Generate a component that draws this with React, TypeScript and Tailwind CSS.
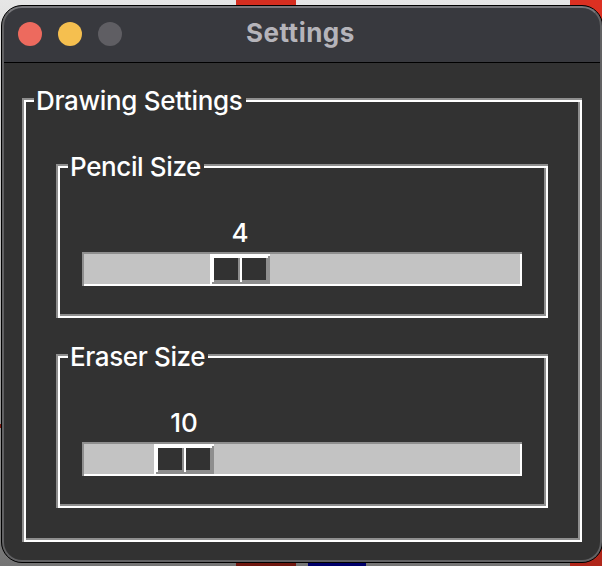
import React from "react";

type GroupProps = {
  title: string;
  className: string;
  labelClass: string;
  textClass: string;
  children: React.ReactNode;
};

function GroupBox({ title, className, labelClass, textClass, children }: GroupProps) {
  return (
    <section
      className={`relative p-0.5 shadow-[inset_2px_2px_0_#8e8e8e,inset_-2px_-2px_0_#fff] ${className}`}
    >
      <div className="h-full shadow-[inset_2px_2px_0_#fff,inset_-2px_-2px_0_#8e8e8e]">{children}</div>
      <div className={`absolute -top-3 left-3 h-[30px] bg-[#323232] pl-0.5 leading-[30px] ${labelClass}`}>
        <span className={`block whitespace-nowrap ${textClass}`}>{title}</span>
      </div>
    </section>
  );
}

function ThumbHalf() {
  return (
    <div className="flex-1 bg-[#323232] shadow-[inset_2px_2px_0_#fff,inset_-2px_-2px_0_#8e8e8e]" />
  );
}

function Scale({ value, offset }: { value: number; offset: string }) {
  return (
    <div className="px-6 pt-[52px]">
      <div className={offset}>
        <div className="h-[34px] w-[60px] text-center leading-[30px]">{value}</div>
      </div>
      <div className="h-[34px] bg-[#c3c3c3] py-0.5 shadow-[inset_2px_2px_0_#8e8e8e,inset_-2px_-2px_0_#fff]">
        <div className={offset}>
          <div className="flex h-[30px] w-[60px] p-0.5 shadow-[inset_2px_2px_0_#fff,inset_-2px_-2px_0_#8e8e8e]">
            <ThumbHalf />
            <ThumbHalf />
          </div>
        </div>
      </div>
    </div>
  );
}

export default function App() {
  return (
    <div className="relative h-[566px] w-[602px] overflow-hidden bg-linear-to-b from-[#e6e6e6] via-[#b4b4b4] to-[#747474] pl-px pt-[5px] font-['Inter','Liberation_Sans',sans-serif] text-[26px] font-medium text-white">
      <div className="absolute left-[236px] top-0 h-10 w-[60px] bg-[#d52e20]" />
      <div className="absolute left-[570px] top-0 h-20 w-8 bg-[#dc3022]" />
      <div className="absolute left-0 top-[424px] h-1 w-1 bg-[#7a1a12]" />
      <div className="absolute left-[236px] top-[540px] h-[26px] w-[60px] bg-[#70170f]" />
      <div className="absolute left-[308px] top-[540px] h-[26px] w-[58px] bg-[#00006b]" />
      <div className="absolute left-[570px] top-[520px] h-[46px] w-8 bg-[#b0261a]" />

      <div className="relative h-[558px] w-[602px] overflow-hidden rounded-[21px] border border-black bg-[#323232]">
        <header className="relative flex h-[57px] items-center border-b border-black bg-[#38393e] pl-4">
          <div className="flex gap-4">
            <span className="size-6 rounded-full bg-[#ed6a5e]" />
            <span className="size-6 rounded-full bg-[#f5bf4f]" />
            <span className="size-6 rounded-full bg-[#5f5e63]" />
          </div>
          <h1 className="ml-[124px] -mt-[3px] whitespace-nowrap text-[26px] font-bold tracking-[0.5px] text-[#b5b4ba]">
            Settings
          </h1>
        </header>

        <main className="pl-5 pt-[35px]">
          <GroupBox
            title="Drawing Settings"
            className="h-[444px] w-[560px]"
            labelClass="w-[212px]"
            textClass="tracking-[-0.32px]"
          >
            <div className="flex flex-col gap-9 pl-8 pt-16">
              <GroupBox
                title="Pencil Size"
                className="h-[154px] w-[492px]"
                labelClass="w-[136px]"
                textClass="tracking-[-0.38px]"
              >
                <Scale value={4} offset="pl-[128px]" />
              </GroupBox>
              <GroupBox
                title="Eraser Size"
                className="h-[154px] w-[492px]"
                labelClass="w-[140px]"
                textClass="tracking-[-0.38px]"
              >
                <Scale value={10} offset="pl-[72px]" />
              </GroupBox>
            </div>
          </GroupBox>
        </main>
        <div className="pointer-events-none absolute inset-0 rounded-[20px] border-2 border-[#616163] border-t-[#77777b]" />
      </div>
    </div>
  );
}
